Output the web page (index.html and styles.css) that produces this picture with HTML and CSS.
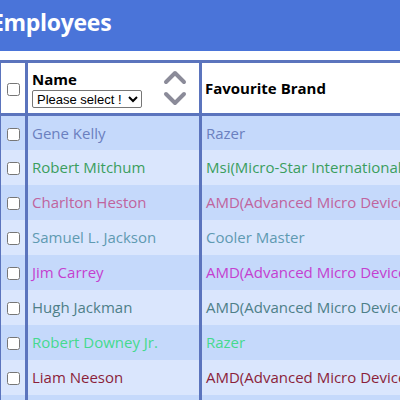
FILE: index.html
```html
<!DOCTYPE html>
<html>
<head>
<meta charset="utf-8">
<link rel="stylesheet" href="styles.css">
</head>
<body>
<div class="page">
  <header class="topbar"><h1 class="title">Employees</h1></header>
  <table class="grid">
    <colgroup><col class="w-check"><col class="w-name"><col class="w-brand"></colgroup>
    <thead>
      <tr>
        <th class="col-check"><input type="checkbox" class="chk"></th>
        <th class="col-name">
          <div class="name-head">
            <div class="name-left">
              <div class="head-label">Name</div>
              <select class="picker"><option>Please select !</option></select>
            </div>
            <svg class="sort" width="24" height="40" viewBox="0 0 24 40">
              <path d="M3 14 L12 5 L21 14" fill="none" stroke="#8b8b99" stroke-width="4" stroke-linecap="round" stroke-linejoin="round"/>
              <path d="M3 26 L12 35 L21 26" fill="none" stroke="#8b8b99" stroke-width="4" stroke-linecap="round" stroke-linejoin="round"/>
            </svg>
          </div>
        </th>
        <th class="col-brand"><span class="head-label">Favourite Brand</span></th>
      </tr>
    </thead>
    <tbody>
      <tr class="odd"><td class="col-check"><input type="checkbox" class="chk"></td><td class="c1">Gene Kelly</td><td class="c1">Razer</td></tr>
      <tr class="even"><td class="col-check"><input type="checkbox" class="chk"></td><td class="c2">Robert Mitchum</td><td class="c2">Msi(Micro-Star International Co., Ltd)</td></tr>
      <tr class="odd"><td class="col-check"><input type="checkbox" class="chk"></td><td class="c3">Charlton Heston</td><td class="c3">AMD(Advanced Micro Devices)</td></tr>
      <tr class="even"><td class="col-check"><input type="checkbox" class="chk"></td><td class="c4">Samuel L. Jackson</td><td class="c4">Cooler Master</td></tr>
      <tr class="odd"><td class="col-check"><input type="checkbox" class="chk"></td><td class="c5">Jim Carrey</td><td class="c5">AMD(Advanced Micro Devices)</td></tr>
      <tr class="even"><td class="col-check"><input type="checkbox" class="chk"></td><td class="c6">Hugh Jackman</td><td class="c6">AMD(Advanced Micro Devices)</td></tr>
      <tr class="odd"><td class="col-check"><input type="checkbox" class="chk"></td><td class="c7">Robert Downey Jr.</td><td class="c7">Razer</td></tr>
      <tr class="even"><td class="col-check"><input type="checkbox" class="chk"></td><td class="c8">Liam Neeson</td><td class="c8">AMD(Advanced Micro Devices)</td></tr>
      <tr class="odd"><td class="col-check"><input type="checkbox" class="chk"></td><td class="c1">Tom Hanks</td><td class="c1">Razer</td></tr>
    </tbody>
  </table>
</div>
</body>
</html>
```
FILE: styles.css
```css
html, body {
  margin: 0;
  padding: 0;
  background: #ffffff;
  overflow: hidden;
  width: 400px;
  height: 400px;
}
.page {
  font-family: "Open Sans", "Noto Sans", sans-serif;
  width: 700px;
}
.topbar {
  background: #4a74d9;
  height: 51px;
  display: flex;
  align-items: flex-start;
  margin-bottom: 9px;
}
.title {
  margin: 5px 0 0 -9px;
  color: #ffffff;
  font-size: 23px;
  line-height: 34px;
  font-weight: 700;
  letter-spacing: -0.3px;
}
.grid {
  border-collapse: collapse;
  margin-left: -2px;
  width: 620px;
  table-layout: fixed;
  border: 3px solid #5b74bd;
}
.w-check { width: 27px; }
.w-name { width: 174px; }
.grid th, .grid td {
  padding: 0;
  border-left: 3px solid #5b74bd;
  border-right: 3px solid #5b74bd;
  text-align: left;
  vertical-align: middle;
}
.grid thead tr {
  height: 53px;
  background: #ffffff;
  border-bottom: 3px solid #5b74bd;
}
.grid thead th {
  border-top: 3px solid #5b74bd;
}
.grid th.col-check, .grid td.col-check {
  text-align: center;
  padding: 0;
}
.chk {
  margin: 0;
  width: 13px;
  height: 13px;
  vertical-align: middle;
}
.name-head {
  display: flex;
  align-items: center;
  justify-content: space-between;
  padding: 0 12px 0 4px;
}
.name-left {
  display: flex;
  flex-direction: column;
  align-items: flex-start;
  gap: 1px;
}
.head-label {
  font-weight: 700;
  font-size: 15px;
  color: #000000;
}
.col-brand .head-label { padding-left: 3px; }
.picker {
  font-family: Arial, "Liberation Sans", sans-serif;
  font-size: 13px;
  height: 18px;
  width: 110px;
  padding: 0;
  border: 1px solid #767676;
  border-radius: 2px;
  background: #ffffff;
  color: #000;
}
.sort { display: block; }
.grid tbody tr { height: 35px; }
.grid tbody td {
  font-size: 15px;
  padding-left: 4px;
  white-space: nowrap;
  overflow: hidden;
}
.odd { background: #c5d9fb; }
.even { background: #dae6fd; }
.c1 { color: #6b80bf; }
.c2 { color: #3a9e5e; }
.c3 { color: #c0649e; }
.c4 { color: #5f9ab2; }
.c5 { color: #c43fcf; }
.c6 { color: #4e7f88; }
.c7 { color: #45d98f; }
.c8 { color: #8b1f3a; }
```
